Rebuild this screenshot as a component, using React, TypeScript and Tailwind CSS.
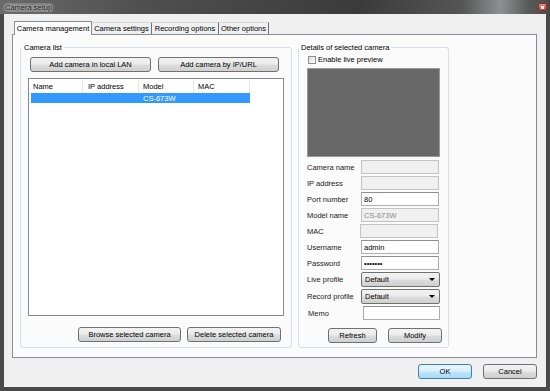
import React from "react";

const btn =
  "flex items-center justify-center h-[15px] rounded-[3px] border border-[#707070] bg-[linear-gradient(#f2f2f2,#ebebeb_48%,#dddddd_52%,#cfcfcf)] text-black";

function Input({
  value,
  disabled,
  w = "w-[78px]",
  gray,
}: {
  value?: string;
  disabled?: boolean;
  w?: string;
  gray?: boolean;
}) {
  return (
    <div
      className={`${w} h-[14px] flex items-center pl-[2px] border ${
        disabled
          ? "bg-[#f0f0f0] border-[#c3c3c3]"
          : "bg-white border-[#abadb3] border-t-[#8e8f8f]"
      } ${gray ? "text-[#8a8a8a]" : "text-black"}`}
    >
      {value}
    </div>
  );
}

function Select({ value }: { value: string }) {
  return (
    <div className="w-[79px] h-[15px] flex items-center justify-between pl-[3px] pr-[4px] rounded-[2px] border border-[#707070] bg-[linear-gradient(#f2f2f2,#ebebeb_48%,#dddddd_52%,#cfcfcf)]">
      <span>{value}</span>
      <span className="w-0 h-0 border-l-[3px] border-r-[3px] border-t-[3px] border-l-transparent border-r-transparent border-t-black" />
    </div>
  );
}

function Row({ label, children, lw = "w-[54px]" }: { label: string; children: React.ReactNode; lw?: string }) {
  return (
    <div className="flex items-center">
      <div className={`${lw} shrink-0 text-[#1a1a1a]`}>{label}</div>
      {children}
    </div>
  );
}

export default function App() {
  return (
    <div className="relative flex h-[391px] w-[550px] flex-col bg-[#4a4a4a] font-['Liberation_Sans',Arial,sans-serif] text-[7.5px] leading-[9px] text-black">
      {/* title bar */}
      <div className="h-[14px] shrink-0 bg-[linear-gradient(90deg,#6a6a6a,#505050_25%,#3b3b3b_65%,#555555_84%,#8c9194_91%,#5a5a5a_96%,#4a4a4a)] pl-[4px] pt-[3px]">
        <span className="rounded-[4px] bg-[#8e8e8e]/60 px-[1px] text-[#111] [text-shadow:0_0_2px_#e8e8e8,0_0_4px_#d0d0d0]">Camera setup</span>
      </div>
      <div className="absolute right-[3px] top-[3px] flex h-[8px] w-[9px] items-center justify-center rounded-[2px] border border-[#8a3328] bg-[linear-gradient(#e98a7a,#c8432f)]">
        <div className="h-[3px] w-[3px] bg-white" />
      </div>

      {/* content */}
      <div className="mx-[4px] mb-[4px] flex flex-1 flex-col bg-[#f0f0f0]">
        {/* tabs */}
        <div className="ml-[8px] mt-[7px] flex h-[13px] items-end">
          <div className="relative z-10 ml-[2px] flex h-[14px] w-[78px] translate-y-[1px] items-center justify-center border border-b-0 border-[#898c95] bg-[#fbfbfb]">
            Camera management
          </div>
          <div className="flex h-[12px] w-[60px] items-center justify-center border-r border-t border-r-[#6f7278] border-t-[#d8d8d8]">
            Camera settings
          </div>
          <div className="flex h-[12px] w-[67px] items-center justify-center border-r border-t border-r-[#6f7278] border-t-[#d8d8d8]">
            Recording options
          </div>
          <div className="flex h-[12px] w-[50px] items-center justify-center border-r border-t border-r-[#6f7278] border-t-[#d8d8d8]">
            Other options
          </div>
        </div>

        {/* panel */}
        <div className="ml-[8px] flex h-[324px] w-[525px] gap-[6px] border border-[#898c95] bg-[#fbfbfb] pl-[7px] pt-[8px]">
          {/* camera list */}
          <fieldset className="flex h-[305px] w-[270px] flex-col rounded-[3px] border border-[#d5dfe5] px-[7px]">
            <legend className="ml-[-6px] px-[2px] leading-[9px]">Camera list</legend>
            <div className="mt-[5px] flex gap-[7px] pl-[2px]">
              <div className={`${btn} w-[121px]`}>Add camera in local LAN</div>
              <div className={`${btn} w-[121px]`}>Add camera by IP/URL</div>
            </div>
            <div className="mt-[6px] h-[238px] w-[256px] border border-[#828790] bg-white">
              <div className="flex h-[14px] items-center">
                <div className="flex h-full w-[54px] items-center border-r border-[#e5e5e5] pl-[4px]">Name</div>
                <div className="flex h-full w-[56px] items-center border-r border-[#e5e5e5] pl-[5px]">IP address</div>
                <div className="flex h-full w-[55px] items-center border-r border-[#e5e5e5] pl-[4px]">Model</div>
                <div className="flex h-full w-[56px] items-center border-r border-[#e5e5e5] pl-[4px]">MAC</div>
              </div>
              <div className="ml-[2px] flex h-[10px] w-[219px] items-center bg-[#3399ff] pl-[112px] text-white">
                CS-673W
              </div>
            </div>
            <div className="mt-[11px] flex justify-end gap-[6px] pr-[3px]">
              <div className={`${btn} w-[103px]`}>Browse selected camera</div>
              <div className={`${btn} w-[94px]`}>Delete selected camera</div>
            </div>
          </fieldset>

          {/* details */}
          <fieldset className="flex h-[305px] w-[151px] flex-col rounded-[3px] border border-[#d5dfe5] pl-[8px] pr-[6px]">
            <legend className="ml-[-8px] px-[2px] leading-[9px]">Details of selected camera</legend>
            <div className="mt-[3px] flex items-center">
              <div className="ml-[1px] h-[8px] w-[8px] border border-[#8f8f8f] bg-[linear-gradient(135deg,#dcdcdc,#ffffff)]" />
              <span className="ml-[2px]">Enable live preview</span>
            </div>
            <div className="mt-[4px] h-[89px] w-[133px] border border-[#9a9a9a] bg-[#686868]" />
            <div className="mt-[3px] flex flex-col gap-[2px]">
              <Row label="Camera name">
                <Input disabled />
              </Row>
              <Row label="IP address">
                <Input disabled />
              </Row>
              <Row label="Port number">
                <Input value="80" />
              </Row>
              <Row label="Model name">
                <Input value="CS-673W" disabled gray />
              </Row>
              <Row label="MAC" lw="w-[53px]">
                <Input disabled />
              </Row>
              <Row label="Username">
                <Input value="admin" />
              </Row>
              <Row label="Password">
                <Input value="•••••••" />
              </Row>
              <Row label="Live profile">
                <Select value="Default" />
              </Row>
              <Row label="Record profile">
                <Select value="Default" />
              </Row>
              <Row label="Memo" lw="w-[56px] pl-[1px]">
                <Input w="w-[77px]" />
              </Row>
            </div>
            <div className="mt-[8px] flex justify-end gap-[11px]">
              <div className={`${btn} w-[49px]`}>Refresh</div>
              <div className={`${btn} w-[54px]`}>Modify</div>
            </div>
          </fieldset>
        </div>

        {/* dialog buttons */}
        <div className="mt-[6px] flex justify-end gap-[11px] pr-[9px]">
          <div className="flex h-[15px] w-[54px] items-center justify-center rounded-[3px] border border-[#3c7fb1] bg-[linear-gradient(#eaf6fd,#d9f0fc_48%,#bee6fd_52%,#a7d9f5)]">
            OK
          </div>
          <div className={`${btn} w-[54px]`}>Cancel</div>
        </div>
      </div>
    </div>
  );
}
